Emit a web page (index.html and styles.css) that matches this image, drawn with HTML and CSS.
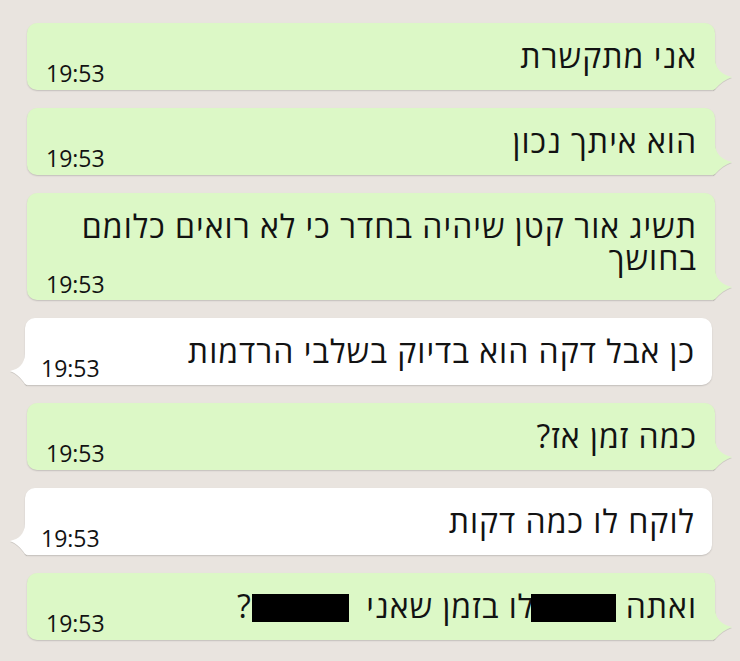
FILE: index.html
```html
<!DOCTYPE html>
<html lang="he" dir="rtl">
<head>
<meta charset="utf-8">
<link rel="stylesheet" href="styles.css">
</head>
<body>
<div class="chat">
  <div class="msg out">
    <div class="text">אני מתקשרת</div>
    <div class="time">19:53</div>
    <svg class="tail tail-out" viewBox="0 0 20 32"><path d="M0 1 L2 1 C2.5 11 9 17 19 19 C13 21 7 25 2 31 L0 32 Z"/></svg>
  </div>
  <div class="msg out">
    <div class="text">הוא איתך נכון</div>
    <div class="time">19:53</div>
    <svg class="tail tail-out" viewBox="0 0 20 32"><path d="M0 1 L2 1 C2.5 11 9 17 19 19 C13 21 7 25 2 31 L0 32 Z"/></svg>
  </div>
  <div class="msg out multi">
    <div class="text">תשיג אור קטן שיהיה בחדר כי לא רואים כלומם בחושך</div>
    <div class="time">19:53</div>
    <svg class="tail tail-out" viewBox="0 0 20 32"><path d="M0 1 L2 1 C2.5 11 9 17 19 19 C13 21 7 25 2 31 L0 32 Z"/></svg>
  </div>
  <div class="msg in">
    <div class="text">כן אבל דקה הוא בדיוק בשלבי הרדמות</div>
    <div class="time">19:53</div>
    <svg class="tail tail-in" viewBox="0 0 18 32"><path d="M18 1 L16 1 C15.5 11 10 16 1 18 C7 20 12 25 16 31 L18 32 Z"/></svg>
  </div>
  <div class="msg out">
    <div class="text">כמה זמן אז?</div>
    <div class="time">19:53</div>
    <svg class="tail tail-out" viewBox="0 0 20 32"><path d="M0 1 L2 1 C2.5 11 9 17 19 19 C13 21 7 25 2 31 L0 32 Z"/></svg>
  </div>
  <div class="msg in">
    <div class="text">לוקח לו כמה דקות</div>
    <div class="time">19:53</div>
    <svg class="tail tail-in" viewBox="0 0 18 32"><path d="M18 1 L16 1 C15.5 11 10 16 1 18 C7 20 12 25 16 31 L18 32 Z"/></svg>
  </div>
  <div class="msg out">
    <div class="text">ואתה <span class="redact redact-1"></span>לו בזמן שאני <span class="redact redact-2"></span>?</div>
    <div class="time">19:53</div>
    <svg class="tail tail-out" viewBox="0 0 20 32"><path d="M0 1 L2 1 C2.5 11 9 17 19 19 C13 21 7 25 2 31 L0 32 Z"/></svg>
  </div>
</div>
</body>
</html>
```
FILE: styles.css
```css
html, body {
  margin: 0;
  padding: 0;
}
body {
  background: #e9e4df;
  font-family: "Open Sans", "DejaVu Sans", sans-serif;
  color: #121212;
  width: 740px;
  height: 661px;
  overflow: hidden;
}
.chat {
  display: flex;
  flex-direction: column;
  gap: 18px;
  padding-top: 23px;
}
.msg {
  position: relative;
  box-sizing: border-box;
  border-radius: 10px;
  box-shadow: 0 1px 1.5px rgba(0, 0, 0, 0.16);
}
.out {
  background: #dcf8c6;
  margin-left: 27px;
  margin-right: 25px;
  padding: 17px 18px 5px 19px;
  border-bottom-right-radius: 3px;
}
.in {
  background: #ffffff;
  margin-left: 25px;
  margin-right: 28px;
  padding: 17px 17px 5px 16px;
  border-bottom-left-radius: 3px;
}
.text {
  font-size: 32px;
  line-height: 32px;
  letter-spacing: 1px;
}
.time {
  font-size: 23px;
  line-height: 24px;
  margin-top: -11px;
  direction: ltr;
  text-align: left;
}
.multi {
  padding-bottom: 6px;
}
.multi .time {
  margin-top: 0;
  line-height: 20px;
}
.tail {
  position: absolute;
  bottom: 0;
  height: 32px;
  filter: drop-shadow(0 1px 0.6px rgba(0, 0, 0, 0.12));
}
.tail-out {
  right: -18px;
  width: 20px;
  fill: #dcf8c6;
}
.tail-in {
  left: -16px;
  width: 18px;
  fill: #ffffff;
}
.redact {
  display: inline-block;
  background: #000;
  height: 28px;
  vertical-align: -4px;
}
.redact-1 {
  width: 85px;
  margin-left: -3px;
}
.redact-2 {
  width: 97px;
  margin-right: 8px;
}
```
